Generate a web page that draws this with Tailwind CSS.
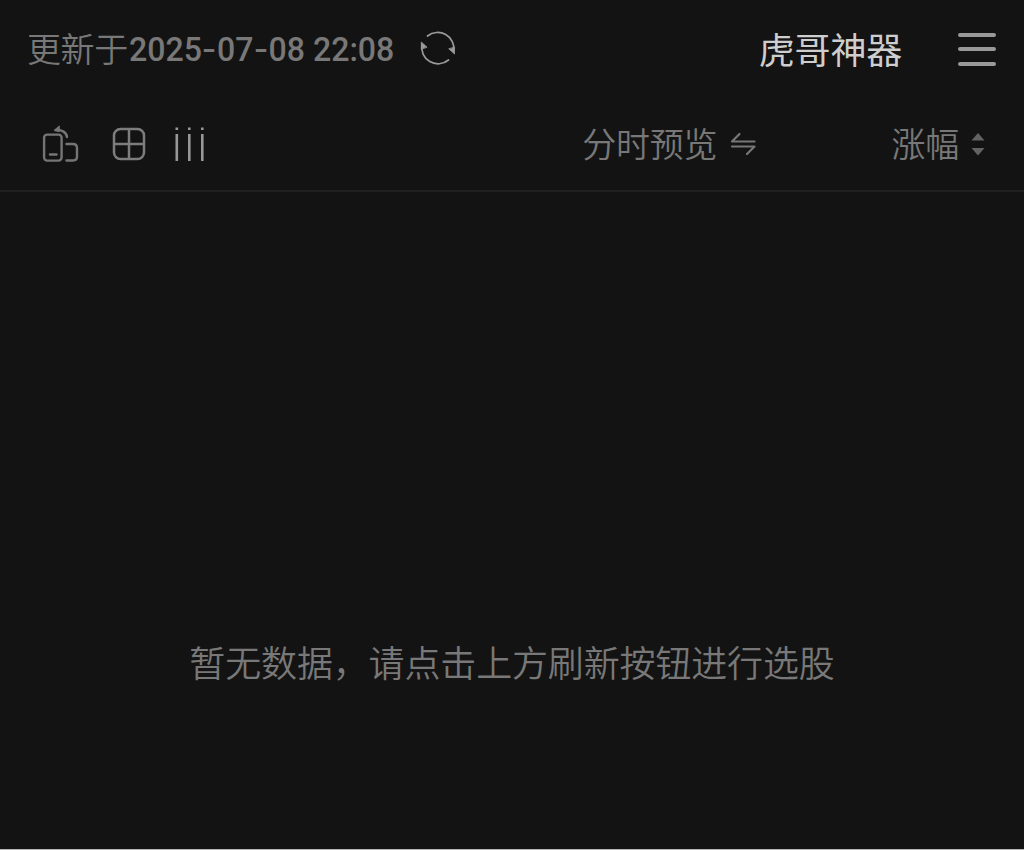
<!DOCTYPE html>
<html lang="zh-CN">
<head>
    <meta charset="UTF-8">
    <meta name="viewport" content="width=device-width, initial-scale=1.0">
    <title>虎哥神器</title>
    <script src="https://cdn.jsdelivr.net/npm/@tailwindcss/browser@4"></script>
</head>
<body class="bg-[#131313] h-screen overflow-hidden flex flex-col border-b border-[#b5b5b5] font-['Noto_Sans_CJK_SC',sans-serif] font-[350] text-[#787878]">
    <header class="h-[98px] shrink-0 flex items-center justify-between pl-[27px] pr-7">
        <div class="flex items-center">
            <span class="w-[102px] pb-[2px] text-[34px] leading-[50px] tracking-[-0.4px]">更新于</span>
            <span class="w-[265px] whitespace-nowrap origin-left scale-x-[0.943] font-[Roboto,sans-serif] font-medium text-[34px] leading-[50px]">2025<span class="inline-block w-[16px] text-center scale-x-125">-</span>07<span class="inline-block w-[16px] text-center scale-x-125">-</span>08 22:08</span>
            <button class="ml-[26px]" aria-label="刷新">
                <svg class="block w-9 h-9" viewBox="0 0 36 36" fill="none" stroke="#9a9a9a" stroke-width="1.7" stroke-linecap="round">
                    <path d="M7.500 5A16.300 16.300 0 0 1 33.800 20"/>
                    <path d="M28.500 29A16.300 16.300 0 0 1 2 13.500"/>
                    <path d="M34.500 16.500V23L29 18z" fill="#9a9a9a" stroke-width="0.8"/>
                    <path d="M1.300 18V11L6.800 16z" fill="#9a9a9a" stroke-width="0.8"/>
                </svg>
            </button>
        </div>
        <div class="flex items-center">
            <h1 class="pb-[2px] text-[36px] leading-[50px] tracking-[-0.2px] font-normal text-[#cecece]">虎哥神器</h1>
            <button class="ml-[56px] w-[38px] flex flex-col gap-[10.5px]" aria-label="菜单">
                <span class="h-1 rounded-full bg-[#999]"></span>
                <span class="h-1 rounded-full bg-[#999]"></span>
                <span class="h-1 rounded-full bg-[#999]"></span>
            </button>
        </div>
    </header>

    <nav class="h-[94px] shrink-0 flex items-center justify-between pl-[42px] pr-[39px] border-b-2 border-[#202020]">
        <div class="flex items-center">
            <svg class="w-[38px] h-[38px]" viewBox="0 0 38 38" fill="none" stroke="#757575" stroke-width="2.400" stroke-linecap="round" stroke-linejoin="round">
                <rect x="2.100" y="9.600" width="17.500" height="26" rx="3"/>
                <path d="M8 29.500h6.500"/>
                <path d="M24.500 19h6.500q4 0 4 4v8.500q0 4-4 4H24.500"/>
                <path d="M14 5c6-.5 10.500 2.500 11 7"/>
                <path d="M17 1.200l-5 4.300l5 1z" fill="#757575" stroke-width="1"/>
            </svg>
            <svg class="ml-[32px] w-[34px] h-[34px]" viewBox="0 0 34 34" fill="none" stroke="#7d7d7d" stroke-width="2.500">
                <rect x="2" y="2" width="30" height="30" rx="6.500"/>
                <path d="M17 2v30M2 17h30"/>
            </svg>
            <svg class="ml-[28px] w-[32px] h-[36px]" viewBox="0 0 32 36" fill="#979797">
                <path d="M1.500 1.500h2.600v2.600h-2.600zM1.500 8h2.600v27h-2.600zM14 1.500h2.600v2.600h-2.600zM14 8h2.600v27h-2.600zM27 1.500h2.600v2.600h-2.600zM27 8h2.600v27h-2.600z"/>
            </svg>
        </div>
        <div class="flex items-center">
            <button class="flex items-center">
                <span class="pb-[2px] text-[34px] leading-[50px] tracking-[-0.2px]">分时预览</span>
                <svg class="ml-[13px] w-[26px] h-6" viewBox="0 0 26 24" fill="none" stroke="#777" stroke-width="2.200" stroke-linecap="round" stroke-linejoin="round">
                    <path d="M9.500 2L2 9.500h22.500"/>
                    <path d="M2 14.500h22.500L17 22"/>
                </svg>
            </button>
            <button class="ml-[135px] flex items-center">
                <span class="pb-[2px] text-[34px] leading-[50px] tracking-[-0.2px]">涨幅</span>
                <svg class="ml-[12px] w-[14px] h-6" viewBox="0 0 14 24" fill="#636363">
                    <path d="M0.500 8.500L7 1l6.500 7.500zM0.500 16h13L7 23.500z"/>
                </svg>
            </button>
        </div>
    </nav>

    <main class="grow flex justify-center pt-[444px]">
        <p class="text-[36px] leading-[50px] tracking-[-0.15px] whitespace-nowrap">暂无数据，请点击上方刷新按钮进行选股</p>
    </main>
</body>
</html>
